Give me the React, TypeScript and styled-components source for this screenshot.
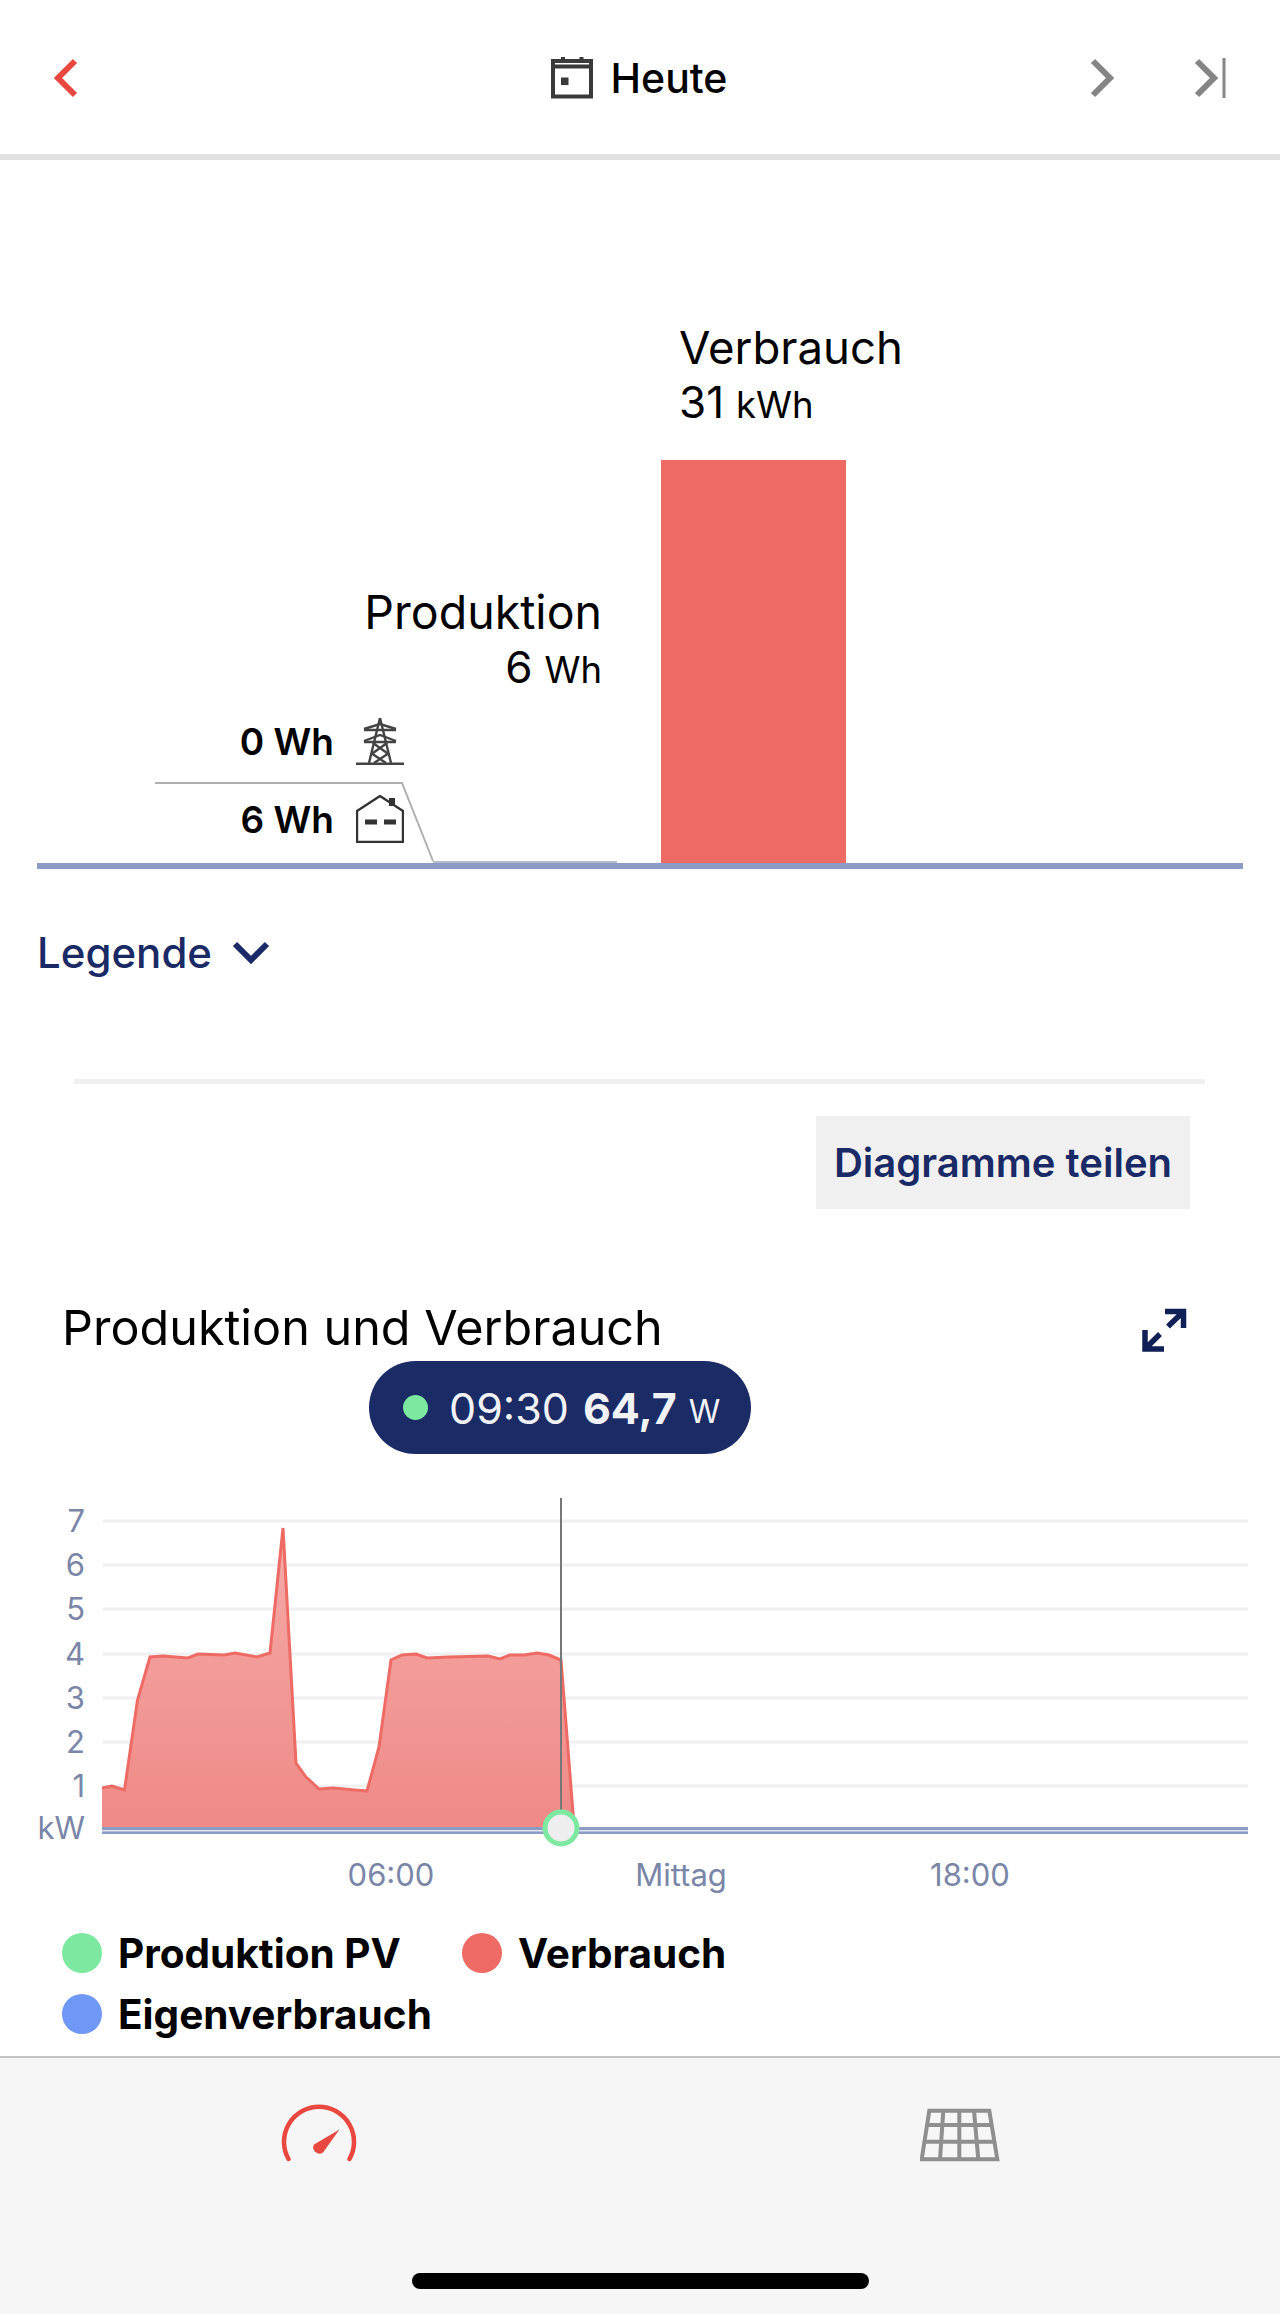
import styled, { createGlobalStyle } from 'styled-components';

const GlobalStyle = createGlobalStyle`
  html, body {
    margin: 0;
    padding: 0;
    background: #fff;
    font-family: Inter, "Noto Sans", sans-serif;
  }
`;

const navy = '#1a2a66';

const Screen = styled.div`
  width: 1280px;
  height: 2314px;
  display: flex;
  flex-direction: column;
  overflow: hidden;
  background: #fff;
  color: #000;
`;

const TopBar = styled.header`
  height: 160px;
  flex: none;
  box-sizing: border-box;
  border-bottom: 6px solid #e2e2e2;
  padding: 2px 54px 0 54px;
  display: flex;
  align-items: center;
  justify-content: space-between;
`;

const DateTitle = styled.div`
  display: flex;
  align-items: center;
  gap: 18px;
  font-size: 41px;
  font-weight: 500;
  margin-left: 110px;
`;

const NavRight = styled.div`
  display: flex;
  align-items: center;
  gap: 80px;
`;

const BarSection = styled.section`
  padding: 0 37px;
  height: 709px;
  flex: none;
  box-sizing: border-box;
  display: flex;
  flex-direction: column;
  justify-content: flex-end;
`;

const Plot = styled.div`
  position: relative;
  display: flex;
  align-items: flex-end;
  gap: 44px;
  border-bottom: 6px solid #8b9bc4;
`;

const ProductionSide = styled.div`
  width: 580px;
  display: flex;
  flex-direction: column;
  align-items: flex-end;
`;

const ProductionHead = styled.div`
  padding-right: 15px;
  text-align: right;
  margin-bottom: 19px;
`;

const ConsumptionSide = styled.div`
  width: 185px;
  display: flex;
  flex-direction: column;
`;

const ConsumptionHead = styled.div`
  padding-left: 18px;
  margin-bottom: 27px;
  white-space: nowrap;
`;

const SeriesName = styled.div<{ $size: number }>`
  font-size: ${({ $size }) => $size}px;
  line-height: 55px;
  font-weight: 400;
`;

const SeriesValue = styled.div`
  font-size: 44px;
  line-height: 55px;
  font-weight: 400;
  span {
    font-size: 36.5px;
    margin-left: 12px;
  }
`;

const ProductionRow = styled.div`
  align-self: stretch;
  display: flex;
  align-items: flex-end;
`;

const Breakdown = styled.div`
  width: 396px;
  box-sizing: border-box;
  padding: 0 29px 20px 0;
  display: flex;
  flex-direction: column;
  gap: 30px;
`;

const BreakdownRow = styled.div`
  display: flex;
  align-items: center;
  justify-content: flex-end;
  gap: 22px;
  font-size: 37px;
  font-weight: 600;
  height: 48px;
`;

const ThinBar = styled.div`
  width: 184px;
  height: 2px;
  background: #b5bccb;
`;

const TallBar = styled.div`
  height: 403px;
  background: #ee6b65;
`;

const Connector = styled.svg`
  position: absolute;
  left: 0;
  bottom: 0;
  pointer-events: none;
`;

const LegendToggle = styled.div`
  padding: 58px 0 0 37px;
  height: 50px;
  display: flex;
  align-items: center;
  gap: 20px;
  color: ${navy};
  font-size: 42px;
  font-weight: 500;
`;

const Divider = styled.div`
  height: 5px;
  margin: 102px 75px 0 74px;
  background: #f0f0f0;
  flex: none;
`;

const ShareRow = styled.div`
  display: flex;
  justify-content: flex-end;
  padding: 32px 90px 0 0;
`;

const ShareButton = styled.div`
  width: 374px;
  height: 93px;
  background: #f0f0f0;
  color: ${navy};
  font-size: 40px;
  font-weight: 600;
  display: flex;
  align-items: center;
  justify-content: center;
`;

const ChartBlock = styled.section`
  position: relative;
  padding-top: 93px;
  flex: none;
`;

const ChartHead = styled.div`
  display: flex;
  align-items: center;
  justify-content: space-between;
  padding: 0 93px 0 62px;
  height: 50px;
`;

const ChartTitle = styled.h2`
  margin: 0;
  font-size: 48.5px;
  font-weight: 400;
`;

const Tooltip = styled.div`
  position: absolute;
  left: 369px;
  top: 152px;
  width: 382px;
  height: 93px;
  box-sizing: border-box;
  padding-left: 34px;
  border-radius: 47px;
  background: #1b2b66;
  color: #f0f2f6;
  display: flex;
  align-items: center;
  font-size: 43px;
`;

const TooltipDot = styled.span`
  width: 25px;
  height: 25px;
  border-radius: 50%;
  background: #7de8a0;
  margin-right: 21px;
`;

const TooltipValue = styled.b`
  font-weight: 700;
  margin-left: 14px;
`;

const TooltipUnit = styled.span`
  font-size: 32px;
  margin: 7px 0 0 12px;
`;

const LineChart = styled.svg`
  display: block;
  margin-top: 146px;
`;

const AxisText = styled.text`
  font-family: Inter, sans-serif;
  font-size: 31px;
  fill: #7a86a8;
`;

const Legend = styled.div`
  margin-top: 35px;
  padding-left: 62px;
  display: grid;
  grid-template-columns: 400px auto;
  justify-content: start;
  row-gap: 21px;
`;

const LegendItem = styled.div`
  display: flex;
  align-items: center;
  gap: 16px;
  font-size: 40.5px;
  font-weight: 700;
  height: 40px;
`;

const LegendDot = styled.span<{ $color: string }>`
  width: 40px;
  height: 40px;
  border-radius: 50%;
  background: ${({ $color }) => $color};
`;

const BottomBar = styled.footer`
  margin-top: auto;
  height: 258px;
  flex: none;
  box-sizing: border-box;
  background: #f6f6f6;
  border-top: 2px solid #c4c4c4;
  display: flex;
  flex-direction: column;
  align-items: center;
`;

const Tabs = styled.div`
  align-self: stretch;
  display: grid;
  grid-template-columns: 640px 640px;
  grid-auto-rows: 60px;
  align-items: end;
  justify-items: center;
  padding-top: 44px;
  height: 171px;
`;

const HomeIndicator = styled.div`
  width: 457px;
  height: 16px;
  border-radius: 8px;
  background: #000;
`;

const Chevron = ({ color, dir }: { color: string; dir: 'left' | 'right' }) => (
  <svg width="24" height="40" viewBox="0 0 24 40" fill="none">
    <path d={dir === 'left' ? 'M21 3 4 20l17 17' : 'M3 3l17 17L3 37'} stroke={color} strokeWidth="6" />
  </svg>
);

const LastIcon = () => (
  <svg width="32" height="40" viewBox="0 0 32 40" fill="none">
    <path d="M3 3l17 17L3 37" stroke="#858585" strokeWidth="6" />
    <path d="M30 0v40" stroke="#858585" strokeWidth="3" />
  </svg>
);

const CalendarIcon = () => (
  <svg width="42" height="42" viewBox="0 0 42 42" fill="none" stroke="#3a3a3a">
    <rect x="2" y="4" width="38" height="35.5" strokeWidth="4" />
    <path d="M2 9.5h38" strokeWidth="4" />
    <path d="M12 0v6M30.5 0v6" strokeWidth="4" />
    <rect x="10" y="20.5" width="7.5" height="7.5" fill="#3a3a3a" stroke="none" />
  </svg>
);

const TowerIcon = () => (
  <svg width="48" height="48" viewBox="0 0 48 48" fill="none" stroke="#444" strokeWidth="2.4">
    <path d="M0 47h48" strokeWidth="3" />
    <path d="M24 1 13 46M24 1l11 45" />
    <path d="M8 12 24 7l16 5M8 24l16-6 16 6" />
    <path d="M8 13h32M8 25h32M15 36l15 10M33 36 18 46M17 26l14 10M31 26 17 36" />
  </svg>
);

const HouseIcon = () => (
  <svg width="48" height="48" viewBox="0 0 48 48" fill="none" stroke="#333" strokeWidth="2.4">
    <path d="M1 47V16L24 1l23 15v31z" />
    <path d="M33 3h6v8h-6z" fill="#333" stroke="none" />
    <path d="M9 27h12M28 27h12" strokeWidth="5" />
  </svg>
);

const ExpandIcon = () => (
  <svg width="46" height="52" viewBox="0 0 46 52" fill="none" stroke="#101f55" strokeWidth="5.5">
    <path d="M24 10.5h18.5V27M42 11 27 25.5" />
    <path d="M4 29v19h19M4 48l15-15" />
  </svg>
);

const GaugeIcon = () => (
  <svg width="78" height="60" viewBox="0 0 78 60" fill="none">
    <path d="M7.5 57A35 35 0 1 1 68.5 57" stroke="#e8483f" strokeWidth="4.5" strokeLinecap="round" />
    <path d="M58.5 27.5 42 50.5a6.2 6.2 0 0 1-9-8z" fill="#e8483f" />
  </svg>
);

const PanelIcon = () => (
  <svg width="80" height="54" viewBox="0 0 80 54" fill="none" stroke="#8f8f8f" strokeWidth="4">
    <path d="M9.3 2.7h60L77.3 51.3H1.7z" />
    <path d="M7 17h65M4.4 33.7h70" />
    <path d="M23.3 2.7 20 51.3M39.3 2.7v48.6M54 2.7l4.3 48.6" />
  </svg>
);

const SmallChevron = () => (
  <svg width="38" height="24" viewBox="0 0 38 24" fill="none">
    <path d="M3 4l16 16L35 4" stroke={navy} strokeWidth="6" />
  </svg>
);

const consumption = [
  [102, 1788], [112, 1786], [124.5, 1790], [137.5, 1700], [150, 1657], [163, 1656], [188, 1658],
  [198, 1654], [224.5, 1655], [235, 1653], [257, 1657], [270, 1653], [283, 1528], [296, 1763],
  [306, 1777], [319, 1789], [333, 1788], [355, 1790], [367, 1791], [379, 1747], [391, 1660],
  [402, 1655], [416, 1654], [427, 1658], [449, 1657], [488, 1656], [500, 1659], [510, 1655],
  [524.5, 1655], [537, 1653], [549, 1655], [561, 1660], [573, 1813], [575, 1827],
];

// chart svg starts at page y 1498
const chartTop = 1498;
const toPoints = (rows: number[][]) => rows.map(([x, y]) => `${x},${y - chartTop}`).join(' ');
const gridValues = [1521, 1565, 1609, 1654, 1698, 1742, 1786];
const yLabels = ['7', '6', '5', '4', '3', '2', '1'];

const ProductionChart = () => (
  <LineChart width="1280" height="400" viewBox="0 0 1280 400">
    <defs>
      <linearGradient id="areaFill" x1="0" y1="0" x2="0" y2="1">
        <stop offset="0" stopColor="#f5aaa7" />
        <stop offset="1" stopColor="#ef8a87" />
      </linearGradient>
    </defs>
    {gridValues.map((y, i) => (
      <g key={y}>
        <line x1="103" x2="1248" y1={y - chartTop} y2={y - chartTop} stroke="#f0f0f0" strokeWidth="3" />
        <AxisText x="85" y={y - chartTop + 11} textAnchor="end">{yLabels[i]}</AxisText>
      </g>
    ))}
    <AxisText x="85" y={1839 - chartTop} textAnchor="end">kW</AxisText>
    <polygon points={`102,${1828 - chartTop} ${toPoints(consumption)}`} fill="url(#areaFill)" />
    <polyline points={toPoints(consumption)} fill="none" stroke="#ee6b65" strokeWidth="3" />
    <rect x="102" y={1827 - chartTop} width="1146" height="7" fill="#8b9bc4" />
    <rect x="102" y={1830 - chartTop} width="1146" height="1.5" fill="#dfe4f0" />
    <line x1="561" x2="561" y1="0" y2={1812 - chartTop} stroke="#777" strokeWidth="2" />
    <circle cx="561" cy={1828 - chartTop} r="16" fill="#eeeeee" stroke="#7de8a0" strokeWidth="5" />
    <AxisText x="391" y={1886 - chartTop} textAnchor="middle">06:00</AxisText>
    <AxisText x="681" y={1886 - chartTop} textAnchor="middle">Mittag</AxisText>
    <AxisText x="970" y={1886 - chartTop} textAnchor="middle">18:00</AxisText>
  </LineChart>
);

export default function App() {
  return (
    <>
      <GlobalStyle />
      <Screen>
        <TopBar>
          <Chevron color="#e8483f" dir="left" />
          <DateTitle>
            <CalendarIcon />
            Heute
          </DateTitle>
          <NavRight>
            <Chevron color="#858585" dir="right" />
            <LastIcon />
          </NavRight>
        </TopBar>

        <BarSection>
          <Plot>
            <ProductionSide>
              <ProductionHead>
                <SeriesName $size={46.5}>Produktion</SeriesName>
                <SeriesValue>6<span>Wh</span></SeriesValue>
              </ProductionHead>
              <ProductionRow>
                <Breakdown>
                  <BreakdownRow>0 Wh <TowerIcon /></BreakdownRow>
                  <BreakdownRow>6 Wh <HouseIcon /></BreakdownRow>
                </Breakdown>
                <ThinBar />
              </ProductionRow>
            </ProductionSide>
            <ConsumptionSide>
              <ConsumptionHead>
                <SeriesName $size={45.5}>Verbrauch</SeriesName>
                <SeriesValue>31<span>kWh</span></SeriesValue>
              </ConsumptionHead>
              <TallBar />
            </ConsumptionSide>
            <Connector width="450" height="90" viewBox="0 0 450 90" fill="none">
              <path d="M118 10h247l31 78" stroke="#b0b0b0" strokeWidth="2" />
            </Connector>
          </Plot>
        </BarSection>

        <LegendToggle>
          Legende
          <SmallChevron />
        </LegendToggle>
        <Divider />
        <ShareRow>
          <ShareButton>Diagramme teilen</ShareButton>
        </ShareRow>

        <ChartBlock>
          <ChartHead>
            <ChartTitle>Produktion und Verbrauch</ChartTitle>
            <ExpandIcon />
          </ChartHead>
          <Tooltip>
            <TooltipDot />
            09:30
            <TooltipValue>64,7</TooltipValue>
            <TooltipUnit>W</TooltipUnit>
          </Tooltip>
          <ProductionChart />
          <Legend>
            <LegendItem><LegendDot $color="#7de8a0" />Produktion PV</LegendItem>
            <LegendItem><LegendDot $color="#ee6b65" />Verbrauch</LegendItem>
            <LegendItem><LegendDot $color="#6f97f5" />Eigenverbrauch</LegendItem>
          </Legend>
        </ChartBlock>

        <BottomBar>
          <Tabs>
            <GaugeIcon />
            <PanelIcon />
          </Tabs>
          <HomeIndicator />
        </BottomBar>
      </Screen>
    </>
  );
}
